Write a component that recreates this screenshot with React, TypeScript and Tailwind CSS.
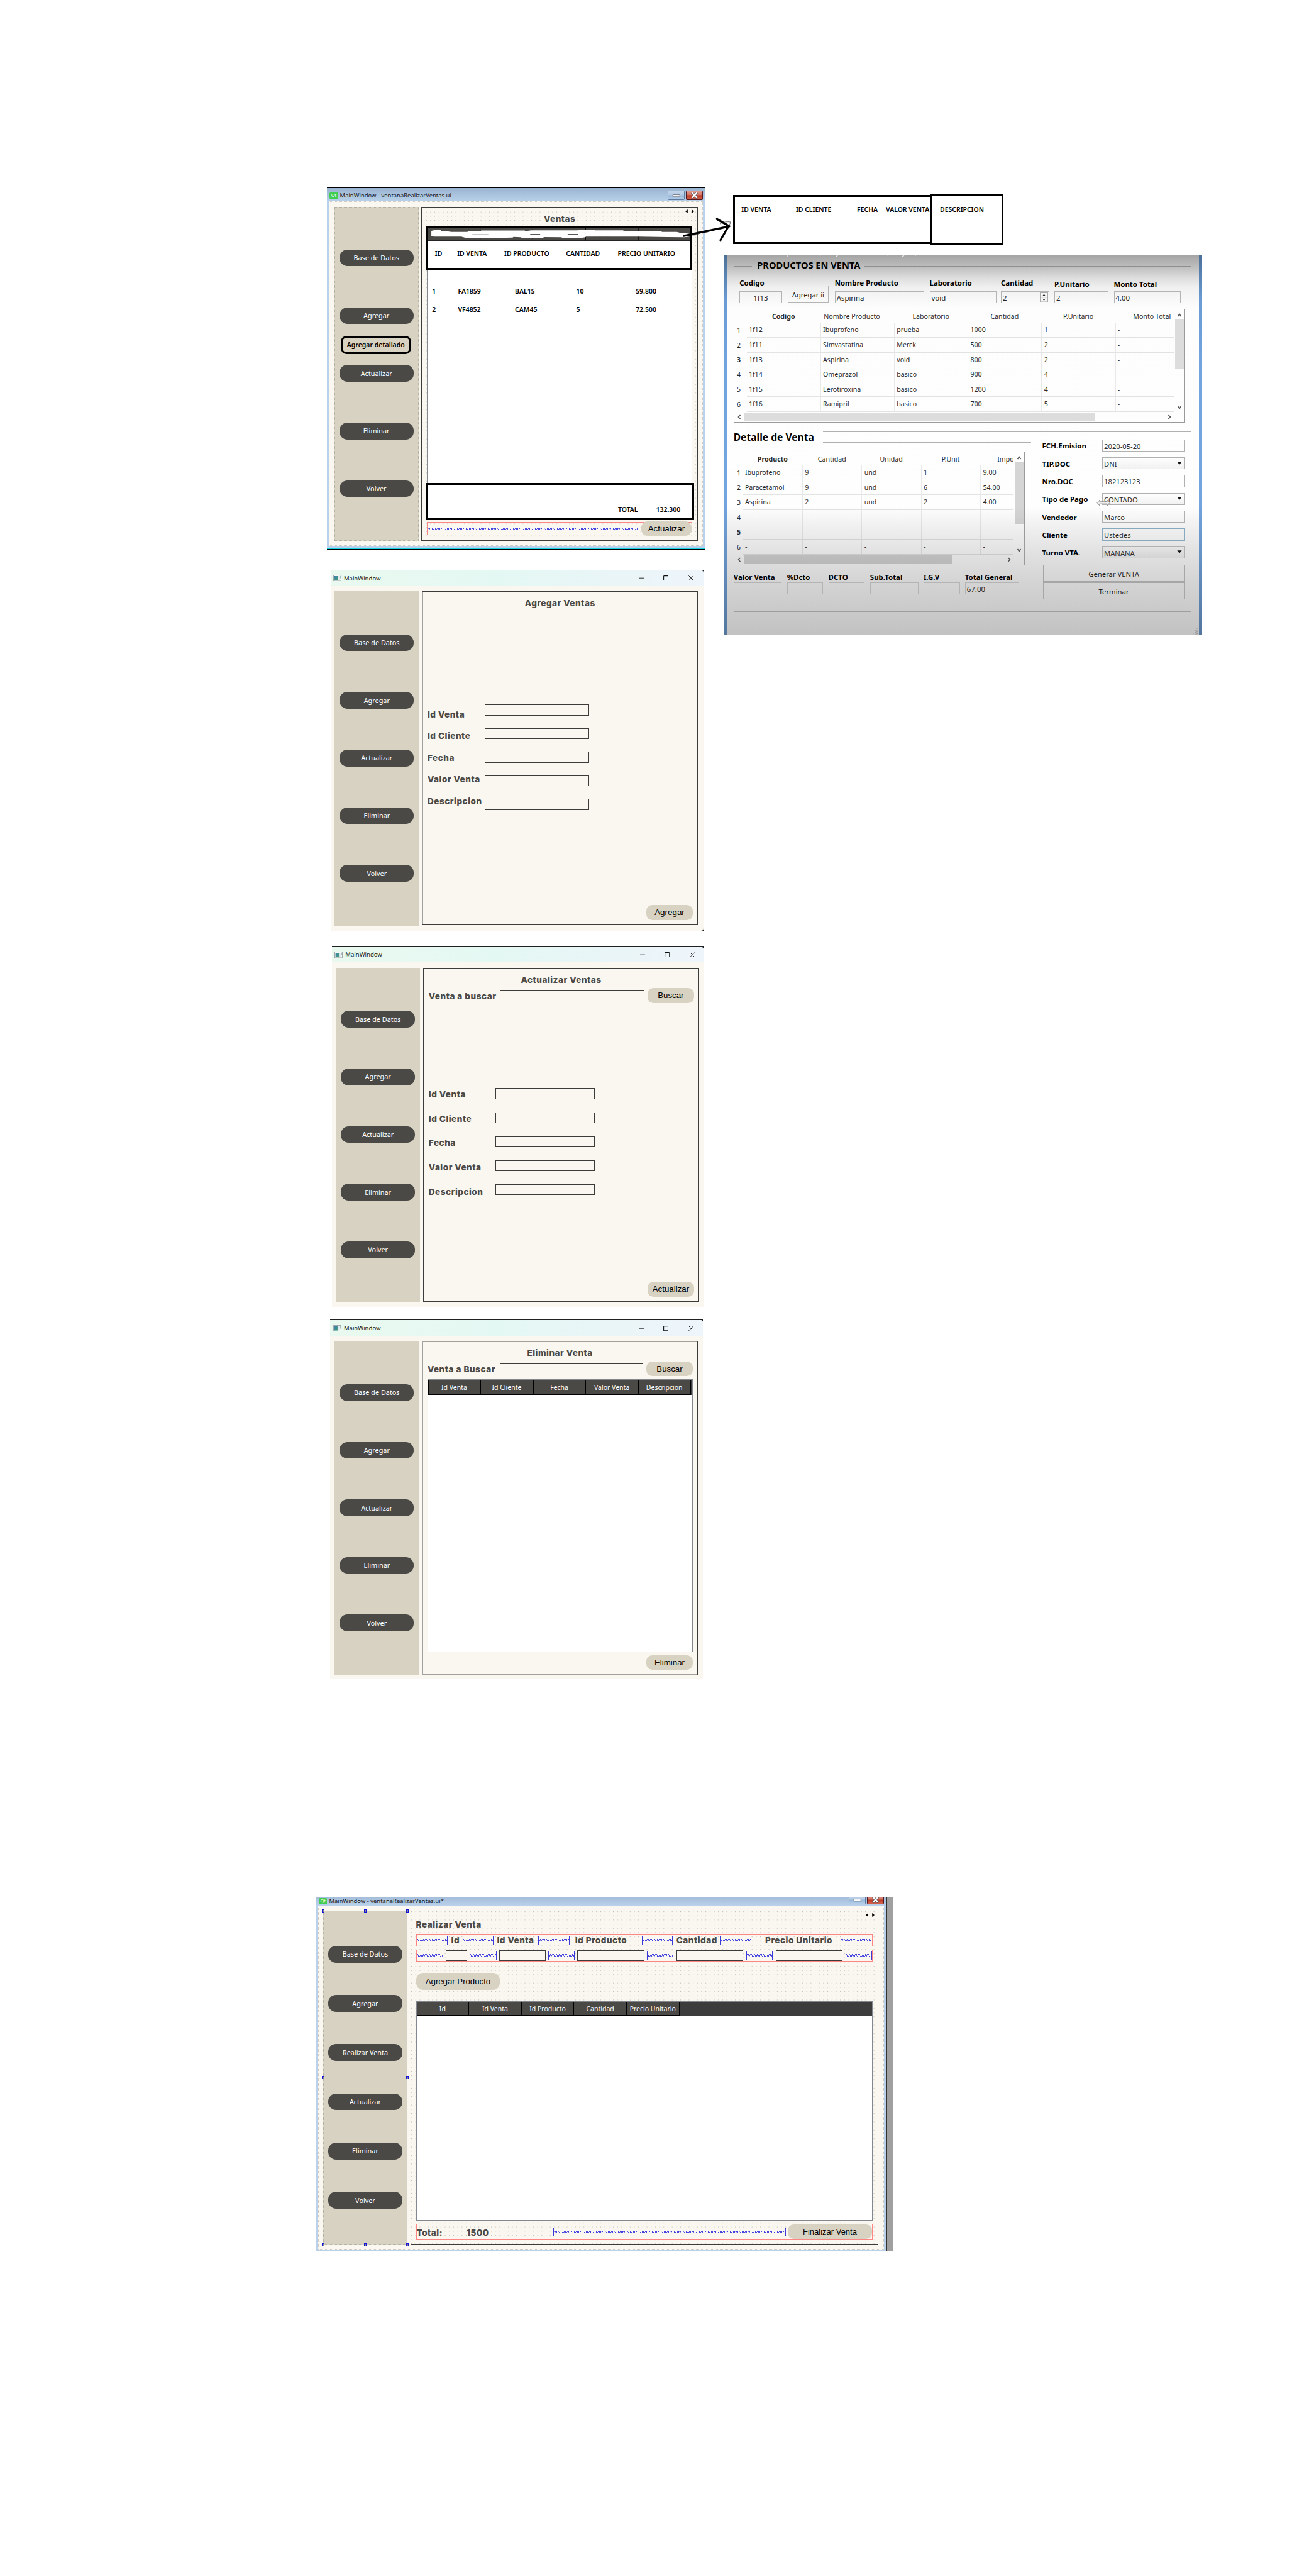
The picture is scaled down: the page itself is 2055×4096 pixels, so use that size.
import React from "react";

const NOTO = "font-['Noto_Sans',sans-serif]";
const ARIAL = "font-['Liberation_Sans',Arial,sans-serif]";
const heavy =
  "font-['Inter',sans-serif] font-extrabold text-[13.6px] leading-[18px] tracking-[0.5px] text-[#4b4946] whitespace-nowrap";
const dots =
  "bg-[radial-gradient(circle_at_0.6px_0.6px,#bdbab4_0.5px,transparent_0.9px)] bg-[length:6.69px_6.69px]";

/* ---------- shared pieces ---------- */

function Sidebar({ items, className = "" }: { items: string[]; className?: string }) {
  return (
    <div className={`flex shrink-0 flex-col items-center justify-between bg-[#d8d2c2] w-[133.8px] ${className}`}>
      {items.map((t) => (
        <button
          key={t}
          className={`${NOTO} flex h-[26.7px] w-[117.9px] items-center justify-center rounded-[12.5px] bg-[#4b4946] pt-px text-[10.85px] leading-none text-white`}
        >
          {t}
        </button>
      ))}
    </div>
  );
}

function Pill({ children, className = "" }: { children: React.ReactNode; className?: string }) {
  return (
    <button
      className={`${ARIAL} flex h-[23.3px] shrink-0 items-center justify-center rounded-[9.5px] bg-[#d8d2c2] leading-none whitespace-nowrap text-black ${className}`}
    >
      {children}
    </button>
  );
}

function Box({ className = "" }: { className?: string }) {
  return <div className={`shrink-0 border border-[#3c3c3a] bg-[#faf7f0] ${className}`} />;
}

function AppIcon() {
  return (
    <svg width="13" height="10.4" viewBox="0 0 13 10.4" className="shrink-0">
      <defs>
        <linearGradient id="app" x1="0" y1="0" x2="1" y2="1">
          <stop offset="0" stopColor="#3f7fb0" />
          <stop offset="1" stopColor="#3fa079" />
        </linearGradient>
      </defs>
      <rect x="0.5" y="0.5" width="12" height="9.4" fill="#f6f8f8" stroke="#a3a9ab" />
      <rect x="1.6" y="2" width="5.6" height="6.6" fill="url(#app)" />
      <rect x="8.3" y="2" width="1.4" height="6.6" fill="#dfe6e6" />
      <rect x="10.8" y="1.6" width="0.8" height="4" fill="#6b96a8" />
    </svg>
  );
}

function Win11({
  children,
  className,
  corners,
  bar,
  body,
  sidebar,
}: {
  children: React.ReactNode;
  className: string;
  corners: string;
  bar: string;
  body: string;
  sidebar: string;
}) {
  return (
    <section className={`absolute bg-[#202020] ${className}`}>
      <div className={`flex h-full flex-col overflow-hidden bg-[#faf7f0] ${corners}`}>
        <div className={`flex shrink-0 items-center bg-[linear-gradient(90deg,#e9f9ef,#e4f8f3_45%,#e9f5f7_75%,#eef5fb)] ${bar}`}>
          <AppIcon />
          <span className={`${NOTO} ml-[4.3px] flex-1 text-[9.55px] leading-none text-[#1b1b1b]`}>MainWindow</span>
          <svg width="8.4" height="8.4" viewBox="0 0 8.4 8.4" className="mr-[30.6px]">
            <path d="M0 4.2H8.4" stroke="#111" strokeWidth="0.9" />
          </svg>
          <svg width="8.4" height="8.4" viewBox="0 0 8.4 8.4" className="mr-[31.2px]">
            <rect x="0.6" y="0.6" width="7.2" height="7.2" rx="0.9" fill="none" stroke="#111" strokeWidth="1.1" />
          </svg>
          <svg width="8.4" height="8.4" viewBox="0 0 8.4 8.4">
            <path d="M0.3 0.3L8.1 8.1M8.1 0.3L0.3 8.1" stroke="#111" strokeWidth="0.9" />
          </svg>
        </div>
        <div className={`flex min-h-0 flex-1 items-start gap-[4.7px] ${body}`}>
          <Sidebar items={["Base de Datos", "Agregar", "Actualizar", "Eliminar", "Volver"]} className={sidebar} />
          <div className="flex h-[531.1px] w-[439.6px] flex-col border border-[#3c3c3a] shadow-[inset_0_0_0_1px_#a3a19d]">
            {children}
          </div>
        </div>
      </div>
    </section>
  );
}

const fields = ["Id Venta", "Id Cliente", "Fecha", "Valor Venta", "Descripcion"];

function QtLogo() {
  return (
    <div className={`${NOTO} flex h-[10px] w-[13.4px] shrink-0 items-center justify-center rounded-[1.5px] bg-[#41cd52] text-[7.4px] leading-none text-white`}>
      Qt
    </div>
  );
}

function AeroButtons({ className = "" }: { className?: string }) {
  return (
    <div className={`flex gap-[2px] ${className}`}>
      <svg width="27" height="15" viewBox="0 0 27 15">
        <defs>
          <linearGradient id="mn" x1="0" y1="0" x2="0" y2="1">
            <stop offset="0" stopColor="#c3d6ea" />
            <stop offset="0.48" stopColor="#b4cbe4" />
            <stop offset="0.52" stopColor="#98b6d7" />
            <stop offset="1" stopColor="#b5cfea" />
          </linearGradient>
        </defs>
        <rect x="0.5" y="0.5" width="26" height="14" rx="1" fill="url(#mn)" stroke="#5f7a9c" />
        <rect x="8.2" y="6.6" width="11" height="3.2" rx="0.6" fill="#fff" stroke="#535b6b" strokeWidth="0.8" />
      </svg>
      <svg width="27" height="15" viewBox="0 0 27 15">
        <defs>
          <linearGradient id="cl" x1="0" y1="0" x2="0" y2="1">
            <stop offset="0" stopColor="#e3a195" />
            <stop offset="0.48" stopColor="#d2705f" />
            <stop offset="0.52" stopColor="#b93a25" />
            <stop offset="1" stopColor="#d5634c" />
          </linearGradient>
        </defs>
        <rect x="0.5" y="0.5" width="26" height="14" rx="1" fill="url(#cl)" stroke="#541a22" />
        <path d="M9.4 3.4L17.8 11.8M17.8 3.4L9.4 11.8" stroke="#535b6b" strokeWidth="3.8" />
        <path d="M9.8 3.7L17.4 11.5M17.4 3.7L9.8 11.5" stroke="#fff" strokeWidth="2.4" />
      </svg>
    </div>
  );
}

function Pager({ className = "" }: { className?: string }) {
  return (
    <svg width="14" height="6" viewBox="0 0 14 6" className={`shrink-0 ${className}`}>
      <path d="M3.8 0L0 3L3.8 6ZM10.2 0L14 3L10.2 6Z" fill="#000" />
    </svg>
  );
}

function Spring({ className = "" }: { className?: string }) {
  return (
    <div className={`flex h-[14px] shrink-0 items-center border-x border-[#3a3ad8] bg-[#faf7f0] ${className}`}>
      <div className="h-[4px] w-full bg-[repeating-linear-gradient(110deg,#4545e0_0px,#4545e0_0.9px,#faf7f0_1.1px,#faf7f0_2.2px)]" />
    </div>
  );
}

/* ---------- window: Ventas ---------- */

function Scribble() {
  return (
    <svg viewBox="19 24 1479 88" preserveAspectRatio="none" className="h-[19.6px] w-full">
      <rect x="19" y="24" width="1479" height="88" fill="#4b4946" />
      <path d="M311.5 24V112M608.5 24V112M905.5 24V112M1202.5 24V112" stroke="#000" strokeWidth="4" />
      <path d="M19 110.5H1498" stroke="#000" strokeWidth="4" />
      <path
        d="M37 42L58 36L90 38L95 44L120 44L150 50L240 50L245 45L312 45L318 40L563 40L568 44L600 39L860 39L865 36L955 36L958 39L1118 39L1120 42L1297 43L1332 46L1338 50L1420 50L1440 56L1490 62V84L1463 88L1368 87L1203 84L908 84L905 88L880 93L775 92L770 88L670 87L668 93L548 92L540 88L500 86L495 90L420 92L415 96L235 96L225 90L205 84L50 84L37 78Z"
        fill="#fff"
      />
      <path d="M268 70H358M594 66H650M805 66H865" stroke="#222" strokeWidth="4" />
      <path d="M955 81H1040" stroke="#4b4946" strokeWidth="5" strokeDasharray="7 5" />
    </svg>
  );
}

const black = `${NOTO} font-semibold text-[10.45px] leading-none text-black whitespace-nowrap`;

function VentasWindow() {
  return (
    <section className="absolute top-[297.5px] left-[519.6px] flex h-[576px] w-[602.6px] flex-col border-t border-b border-black bg-[#b9d1ea]">
      <div className="flex h-[21px] shrink-0 items-center bg-[linear-gradient(#99b4d1,#b9d1ea)] pt-[4px] pl-[4.6px]">
        <QtLogo />
        <span className={`${NOTO} ml-[3px] flex-1 text-[9.45px] leading-none text-[#1b1b1b]`}>
          MainWindow - ventanaRealizarVentas.ui
        </span>
        <AeroButtons className="mr-[4px] self-start" />
      </div>
      <div className="mx-[3.8px] flex h-[548.6px] gap-[4.8px] border border-dotted border-[#cfccc3] bg-[#faf7f0] pt-[8.3px] pl-[7.4px]">
        <div className="relative">
          <Sidebar
            items={["Base de Datos", "Agregar", "Actualizar", "Eliminar", "Volver"]}
            className="h-[531.1px] border border-dotted border-[#b5b1a5] pt-[67px] pb-[68.6px]"
          />
          <div className={`${black} absolute top-[205.3px] left-[10px] flex h-[28.8px] w-[112px] items-center justify-center rounded-[9px] border-[3.2px] border-black`}>
            Agregar detallado
          </div>
        </div>
        <div className={`flex h-[531.1px] w-[439.5px] flex-col border border-[#3c3c3a] ${dots}`}>
          <Pager className="mt-[3px] mr-[5px] self-end" />
          <h2 className={`${heavy} self-center`}>Ventas</h2>
          <div className="mt-[3.4px] ml-[6.2px] flex h-[69px] w-[423.5px] shrink-0 flex-col border-[3.2px] border-black bg-white">
            <Scribble />
            <div className={`${black} grid flex-1 grid-cols-[35.3px_74.9px_98.3px_82.2px_auto] items-center pb-[3px] pl-[11.3px]`}>
              <span>ID</span>
              <span>ID VENTA</span>
              <span>ID PRODUCTO</span>
              <span>CANTIDAD</span>
              <span>PRECIO UNITARIO</span>
            </div>
          </div>
          <div className="ml-[7.8px] h-[339.2px] w-[421.5px] shrink-0 border-x border-[#828790] bg-white pt-[20px]">
            {[
              ["1", "FA1859", "BAL15", "10", "59.800"],
              ["2", "VF4852", "CAM45", "5", "72.500"],
            ].map((r) => (
              <div key={r[0]} className={`${black} grid h-[28.9px] grid-cols-[41.3px_90.6px_97.4px_94.7px_auto] items-center pl-[7px]`}>
                {r.map((c) => (
                  <span key={c}>{c}</span>
                ))}
              </div>
            ))}
          </div>
          <div className={`${black} ml-[7px] flex h-[58.2px] w-[425.9px] shrink-0 items-end justify-end gap-[29px] border-[3.2px] border-black bg-white pr-[19px] pb-[8px]`}>
            <span>TOTAL</span>
            <span>132.300</span>
          </div>
          <div className="mt-[3.4px] ml-[7.4px] flex h-[21.4px] w-[422.4px] items-center justify-between border border-[#ff8484]">
            <Spring className="w-[335.5px]" />
            <Pill className="h-[20.2px] w-[80.5px] text-[13.3px]">Actualizar</Pill>
          </div>
        </div>
      </div>
      <div className="mt-auto h-[1.5px] bg-[#19d3e6]" />
    </section>
  );
}

function HeaderCallout() {
  return (
    <>
      <div className={`${black} absolute top-[309.7px] left-[1166px] flex h-[78.5px] w-[316.5px] border-[3.2px] border-black bg-white pt-[15.6px] pl-[10.3px]`}>
        <span className="w-[86.7px]">ID VENTA</span>
        <span className="w-[97.1px]">ID CLIENTE</span>
        <span className="w-[45.9px]">FECHA</span>
        <span>VALOR VENTA</span>
      </div>
      <div className={`${black} absolute top-[307.7px] left-[1479.3px] h-[82.4px] w-[116.8px] border-[3.2px] border-black bg-white pt-[17.6px] pl-[12.8px]`}>
        DESCRIPCION
      </div>
      <svg width="80" height="44" viewBox="1084 342 80 44" className="absolute top-[342px] left-[1084px]">
        <path d="M1087.5 375.2L1160 359.8M1140.2 348.3L1160 359.7M1146 381.8L1158 361" stroke="#000" strokeWidth="3.3" fill="none" strokeLinecap="round" />
        <path
          d="M1097 374C1104 374 1110 374 1113 371C1116 368 1122 371 1128 368C1134 364 1142 366 1150 363M1145 356C1150 353 1156 352 1162 353C1162 355 1160 358 1158 360M1154.5 364V376"
          stroke="#000"
          strokeWidth="0.6"
          fill="none"
        />
      </svg>
    </>
  );
}

/* ---------- window: productos en venta ---------- */

const lab = `${NOTO} font-bold text-[11.45px] leading-[18px] text-black whitespace-nowrap`;
const val = `${NOTO} flex items-center text-[11.4px] leading-none text-[#222] whitespace-nowrap border border-[#b4b4b4]`;

function Field({ label, value, w, className = "", low, center }: { label: string; value?: string; w: string; className?: string; low?: boolean; center?: boolean }) {
  return (
    <div className={`flex shrink-0 flex-col ${w} ${className}`}>
      <div className={`${lab} h-[21.5px] ${low ? "pt-[1.8px]" : ""}`}>{label}</div>
      <div className={`${val} h-[19.5px] pt-[2px] ${center ? "" : "pl-[2px]"}`}>
        <span className={`flex-1 ${center ? "text-center" : ""}`}>{value}</span>
        {label === "Cantidad" && (
          <svg width="13" height="15.5" viewBox="0 0 13 15.5" className="mt-[-2px] mr-[1px]">
            <rect x="0.5" y="0.5" width="12" height="14.5" fill="#f6f6f6" stroke="#aaa" />
            <path d="M0 7.8H13" stroke="#aaa" />
            <path d="M4 5.5H9L6.5 2.5ZM4 10H9L6.5 13Z" fill="#222" />
          </svg>
        )}
      </div>
    </div>
  );
}

function Chevron({ d }: { d: "up" | "down" | "left" | "right" }) {
  const p = {
    up: "M1.5 6L4 2.5L6.5 6",
    down: "M1.5 2L4 5.5L6.5 2",
    left: "M5.5 1L2.5 4L5.5 7",
    right: "M2.5 1L5.5 4L2.5 7",
  }[d];
  return (
    <svg width="8" height="8" viewBox="0 0 8 8" className="shrink-0">
      <path d={p} fill="none" stroke="#555" strokeWidth="1.6" />
    </svg>
  );
}

function ScrollTable({
  className,
  grid,
  head,
  rows,
  boldRows,
  vthumb,
  hthumb,
  thumb,
}: {
  className: string;
  grid: string;
  head: React.ReactNode;
  rows: string[][];
  boldRows: string;
  vthumb: string;
  hthumb: string;
  thumb: string;
}) {
  return (
    <div className={`${NOTO} flex h-[181px] shrink-0 flex-col overflow-hidden border border-[#9a9a9a] text-[10.65px] leading-none text-[#2b2b2b] ${className}`}>
      <div className="flex">
        <div className="min-w-0 flex-1 overflow-hidden">
          <div className={`grid h-[21.6px] items-center pt-[1.5px] whitespace-nowrap ${grid}`}>{head}</div>
          {rows.map((r) => (
            <div key={r[0]} className={`grid h-[23.6px] ${grid}`}>
              {r.map((c, j) =>
                j === 0 ? (
                  <span key={j} className={`flex items-center pl-[4.2px] ${boldRows.includes(c) ? "font-bold" : ""}`}>
                    {c}
                  </span>
                ) : (
                  <span
                    key={j}
                    className={`flex items-center border-b border-b-black/10 pl-[3.2px] whitespace-nowrap ${j > 1 ? "border-l border-l-black/8" : ""}`}
                  >
                    {c}
                  </span>
                ),
              )}
            </div>
          ))}
        </div>
        <div className="flex w-[17px] flex-col items-center justify-between pt-[5px] pb-[3px]">
          <div className="flex flex-col items-center gap-[3px]">
            <Chevron d="up" />
            <div className={`w-[14.3px] ${thumb} ${vthumb}`} />
          </div>
          <Chevron d="down" />
        </div>
      </div>
      <div className="flex flex-1 items-center justify-between pr-[20px] pl-[4.5px]">
        <div className="flex items-center gap-[3.5px]">
          <Chevron d="left" />
          <div className={`h-[14px] ${thumb} ${hthumb}`} />
        </div>
        <Chevron d="right" />
      </div>
    </div>
  );
}

function Combo({ label, value, kind }: { label: string; value: string; kind?: "combo" | "focus" }) {
  return (
    <div className="flex h-[19.4px] items-center">
      <span className={`${lab} w-[95px] pt-[2px]`}>{label}</span>
      <div
        className={`${NOTO} flex h-full w-[132.7px] items-center justify-between border pt-[2px] pr-[4px] pl-[2.5px] text-[11.2px] leading-none text-[#2b2b2b] ${
          kind === "combo"
            ? "border-[#b0b0b0] bg-[linear-gradient(transparent,rgba(0,0,0,0.05))]"
            : kind === "focus"
              ? "border-[#87a9bd]"
              : "border-[#b0b0b0]"
        }`}
      >
        {value}
        {kind === "combo" && (
          <svg width="8" height="5" viewBox="0 0 8 5" className="mt-[-3px]">
            <path d="M0.3 0.3H7.7L4 4.8Z" fill="#111" />
          </svg>
        )}
      </div>
    </div>
  );
}

function ProductosPanel() {
  return (
    <section className="absolute top-[404.7px] left-[1151.8px] h-[604.1px] w-[760.2px] bg-[linear-gradient(#4b6f97,#6a9bd3_12%,#72a4de_30%,#72a4de_65%,#54769e)] px-[5.4px]">
      <div className="relative h-full overflow-hidden bg-[linear-gradient(#a3a3a3_0px,#aeaeae_8px,#c2c2c2_22px,#dcdcdc_36px,#f0f0f0_52px,#fdfdfd_85px,#fefefe_400px,#f2f2f2_427px,#e2e2e2_472px,#d4d4d4_520px,#c8c8c8_575px,#c2c2c2_604px)] pl-[9.5px]">
        <svg width="260" height="4" viewBox="0 0 260 4" className="absolute top-0 left-[60px]">
          <path
            d="M2 0L1 1M35 0V3.4M89 0L88 1M115.500 0C115 2 114 2.800 112 2.800M195 0L194 1M221 0C220.500 2 219.500 2.800 217.500 2.800M240 0L239 1.200"
            fill="none"
            stroke="#e6e6e6"
            strokeWidth="1.4"
          />
        </svg>
        <div className="flex h-[31.8px] items-end pr-[11.5px]">
          <div className="flex h-[25px] w-full items-center">
            <div className="h-px w-[29.2px] bg-[#8e8e8e]" />
            <span className={`${NOTO} -mt-[6px] ml-[8.4px] w-[170.5px] text-[14.65px] leading-none font-bold whitespace-nowrap text-black`}>
              PRODUCTOS EN VENTA
            </span>
            <div className="h-px flex-1 bg-[#8e8e8e]" />
          </div>
        </div>
        <div className="flow-root h-[235.4px] w-[728px] border-r border-[#b5b5b5]">
          <div className="-mt-[12px] h-[66.4px] border-l border-[#a9a9a9] pt-[16.7px] pl-[8.5px]">
            <div className="flex">
              <Field label="Codigo" value="1f13" w="w-[67.4px]" center />
              <div className={`${NOTO} mt-[13px] ml-[9.4px] flex h-[27px] w-[64.8px] items-center justify-center border border-[#b4b4b4] pt-[2px] text-[11.2px] leading-none whitespace-nowrap text-[#222]`}>
                Agregar ii
              </div>
              <Field label="Nombre Producto" value="Aspirina" w="w-[142.5px]" className="ml-[9.9px]" />
              <Field label="Laboratorio" value="void" w="w-[106.4px]" className="ml-[8.4px]" />
              <Field label="Cantidad" value="2" w="w-[76.7px]" className="ml-[7px]" />
              <Field label="P.Unitario" value="2" w="w-[86.1px]" className="ml-[8.4px]" low />
              <Field label="Monto Total" value="4.00" w="w-[106.4px]" className="ml-[8.4px]" low />
            </div>
          </div>
          <ScrollTable
            className="w-[718.6px]"
            grid="grid-cols-[20px_repeat(6,117.2px)]"
            head={
              <>
                <span />
                <span className="text-center font-bold">Codigo</span>
                <span className="pr-[17px] text-center">Nombre Producto</span>
                <span className="text-center">Laboratorio</span>
                <span className="text-center">Cantidad</span>
                <span className="text-center">P.Unitario</span>
                <span className="text-center">Monto Total</span>
              </>
            }
            rows={[
              ["1", "1f12", "Ibuprofeno", "prueba", "1000", "1", "-"],
              ["2", "1f11", "Simvastatina", "Merck", "500", "2", "-"],
              ["3", "1f13", "Aspirina", "void", "800", "2", "-"],
              ["4", "1f14", "Omeprazol", "basico", "900", "4", "-"],
              ["5", "1f15", "Lerotiroxina", "basico", "1200", "4", "-"],
              ["6", "1f16", "Ramipril", "basico", "700", "5", "-"],
            ]}
            boldRows="3"
            vthumb="h-[78.3px]"
            hthumb="w-[557.2px]"
            thumb="bg-black/13"
          />
        </div>

        <div className="flex">
          <div className="w-[473.6px]">
            <div className="flex h-[45.8px]">
              <div className={`${NOTO} w-[142px] pt-[14px] text-[15.6px] leading-[18px] font-bold whitespace-nowrap text-black`}>Detalle de Venta</div>
              <div className="flex-1 pt-[14.5px]">
                <div className="h-[17.3px] border-y border-[#b0b0b0]" />
              </div>
            </div>
            <div className="w-[472.5px] border-r border-[#b5b5b5]">
              <ScrollTable
                className="w-[463.7px]"
                grid="grid-cols-[14px_repeat(4,94.4px)_60px]"
                head={
                  <>
                    <span />
                    <span className="text-center font-bold">Producto</span>
                    <span className="text-center">Cantidad</span>
                    <span className="text-center">Unidad</span>
                    <span className="text-center">P.Unit</span>
                    <span className="pl-[27px]">Impo</span>
                  </>
                }
                rows={[
                  ["1", "Ibuprofeno", "9", "und", "1", "9.00"],
                  ["2", "Paracetamol", "9", "und", "6", "54.00"],
                  ["3", "Aspirina", "2", "und", "2", "4.00"],
                  ["4", "-", "-", "-", "-", "-"],
                  ["5", "-", "-", "-", "-", "-"],
                  ["6", "-", "-", "-", "-", "-"],
                ]}
                boldRows="5"
                vthumb="h-[98.5px]"
                hthumb="w-[331px]"
                thumb="bg-black/16"
              />
              <div className="mt-[10px] flex h-[36.6px] [&>div>div:last-child]:mt-[-4.5px]">
                <Field label="Valor Venta" w="w-[76.7px]" />
                <Field label="%Dcto" w="w-[57.4px]" className="ml-[8.4px]" />
                <Field label="DCTO" w="w-[57.9px]" className="ml-[8.4px]" />
                <Field label="Sub.Total" w="w-[76.7px]" className="ml-[8.4px]" />
                <Field label="I.G.V" w="w-[57.9px]" className="ml-[8.4px]" />
                <Field label="Total General" value="67.00" w="w-[86.1px]" className="ml-[8px]" />
              </div>
            </div>
            <div className="mt-[12px] border-t border-[#9e9e9e]" />
          </div>
          <div className="flex-1 pt-[14.5px]">
            <div className="mr-[11.5px] border-t border-[#b0b0b0]" />
            <div className="mt-[11.2px] flex h-[266px] w-[254.4px] flex-col gap-[8.93px] border-r border-[#b5b5b5] pl-[17.3px]">
              <Combo label="FCH.Emision" value="2020-05-20" />
              <Combo label="TIP.DOC" value="DNI" kind="combo" />
              <Combo label="Nro.DOC" value="182123123" />
              <div className="relative">
                <Combo label="Tipo de Pago" value="CONTADO" kind="combo" />
                <svg width="22" height="11" viewBox="0 0 22 11" className="absolute top-[10px] left-[86px]">
                  <path d="M1 5.5L5 1.2V3.8H17V1.2L21 5.5L17 9.8V7.2H5V9.8Z" fill="#eee" stroke="#777" strokeWidth="0.9" />
                </svg>
              </div>
              <Combo label="Vendedor" value="Marco" />
              <Combo label="Cliente" value="Ustedes" kind="focus" />
              <Combo label="Turno VTA." value="MAÑANA" kind="combo" />
              <div className="mt-[1px] ml-[1px] flex w-[226px] flex-col gap-[1.8px]">
                {["Generar VENTA", "Terminar"].map((t) => (
                  <div key={t} className={`${NOTO} flex h-[26.9px] items-center justify-center border border-[#a6a6a6] pt-[2px] text-[11.3px] leading-none text-[#222]`}>
                    {t}
                  </div>
                ))}
              </div>
            </div>
          </div>
        </div>
        <div className="mt-[7px] mr-[11.5px] border-t border-[#9e9e9e]" />
        <svg width="9" height="12" viewBox="0 0 9 12" className="absolute right-[1px] bottom-0">
          <path d="M7 1V12M4 5V12M1 9V12" stroke="#8f8f8f" strokeWidth="1.4" strokeDasharray="1.5 1.5" />
        </svg>
      </div>
    </section>
  );
}

/* ---------- window: Realizar Venta ---------- */

function Handles() {
  const h = "h-[5px] w-[4px] border border-[#1414d8] bg-[#8c8c8c]";
  return (
    <div className="absolute -inset-x-[2px] -inset-y-[2.5px] flex flex-col justify-between">
      <div className="flex justify-between">
        <i className={h} />
        <i className={h} />
        <i className={h} />
      </div>
      <div className="flex justify-between">
        <i className={h} />
        <i className={h} />
      </div>
      <div className="flex justify-between">
        <i className={h} />
        <i className={h} />
        <i className={h} />
      </div>
    </div>
  );
}

const th = `${NOTO} flex items-center justify-center text-[10.5px] leading-none text-white whitespace-nowrap`;

function RealizarWindow() {
  return (
    <section className="absolute top-[3016.3px] left-[501.6px] flex h-[564px] w-[919.8px]">
      <div className="flex w-[908.4px] flex-col overflow-hidden bg-[#b9d1ea]">
        <div className="flex h-[13.4px] shrink-0 items-center bg-[linear-gradient(#a3bcd9,#b9d1ea)] pl-[5.4px]">
          <QtLogo />
          <span className={`${NOTO} ml-[3px] flex-1 text-[9.45px] leading-none text-[#1b1b1b]`}>
            MainWindow - ventanaRealizarVentas.ui*
          </span>
          <AeroButtons className="-mt-[5.5px] mr-[4.2px]" />
        </div>
        <div className="mx-[4.2px] flex h-[547.8px] gap-[4.8px] border border-dotted border-[#cfccc3] bg-[#faf7f0] pt-[7.7px] pl-[7.3px]">
          <div className="relative h-[531px]">
            <Sidebar
              items={["Base de Datos", "Agregar", "Realizar Venta", "Actualizar", "Eliminar", "Volver"]}
              className="h-[531px] border border-dotted border-[#b5b1a5] pt-[54.5px] pb-[56.5px]"
            />
            <Handles />
          </div>
          <div className={`flex h-[531px] w-[744.2px] flex-col border border-[#3c3c3a] pl-[7.9px] ${dots}`}>
            <Pager className="mt-[2.5px] mr-[4.5px] self-end" />
            <h2 className={`${heavy} mt-[3.5px]`}>Realizar Venta</h2>
            <div className="mt-[6px] flex h-[20px] w-[726.3px] shrink-0 items-center border border-[#ff8484]">
              <Spring className="w-[49.5px]" />
              <span className={`${heavy} ml-[5.5px] w-[18.2px]`}>Id</span>
              <Spring className="w-[49.5px]" />
              <span className={`${heavy} ml-[5.2px] w-[65.2px]`}>Id Venta</span>
              <Spring className="w-[50px]" />
              <span className={`${heavy} ml-[9px] w-[106.3px]`}>Id Producto</span>
              <Spring className="w-[49.5px]" />
              <span className={`${heavy} ml-[5.3px] w-[69.3px]`}>Cantidad</span>
              <Spring className="w-[50px]" />
              <span className={`${heavy} ml-[22.1px] w-[119.5px]`}>Precio Unitario</span>
              <Spring className="w-[49.5px]" />
            </div>
            <div className="mt-[4.7px] flex h-[18.8px] w-[726.3px] shrink-0 items-center justify-between border border-[#ff8484]">
              <Spring className="w-[42px]" />
              <Box className="h-[17.5px] w-[33.5px]" />
              <Spring className="w-[42.5px]" />
              <Box className="h-[17.5px] w-[73.5px]" />
              <Spring className="w-[41.5px]" />
              <Box className="h-[17.5px] w-[106.3px]" />
              <Spring className="w-[42px]" />
              <Box className="h-[17.5px] w-[106.3px]" />
              <Spring className="w-[42.5px]" />
              <Box className="h-[17.5px] w-[106.3px]" />
              <Spring className="w-[42px]" />
            </div>
            <Pill className="mt-[18px] h-[26.8px] w-[133.8px] rounded-[11px] text-[13.2px]">Agregar Producto</Pill>
            <div className="mt-[18.1px] h-[349.5px] w-[726.3px] shrink-0 border border-[#828790] bg-white">
              <div className="flex h-[21.8px] bg-[#3c3c3c]">
                {["Id", "Id Venta", "Id Producto", "Cantidad", "Precio Unitario"].map((t) => (
                  <div key={t} className={`${th} w-[83.6px] border-r border-b border-black bg-[#4b4946] pt-[2px]`}>
                    {t}
                  </div>
                ))}
              </div>
            </div>
            <div className="mt-[5px] flex h-[24.5px] w-[726.3px] shrink-0 items-center border border-[#ff8484]">
              <span className={`${heavy} w-[79.5px] pt-[2px]`}>Total:</span>
              <span className={`${heavy} w-[137.5px] pt-[2px]`}>1500</span>
              <Spring className="w-[370px]" />
              <Pill className="ml-auto w-[133.8px] text-[13px]">Finalizar Venta</Pill>
            </div>
          </div>
        </div>
      </div>
      <div className="w-px bg-[#333]" />
      <div className="flex-1 bg-[#a0a0a0]" />
    </section>
  );
}

/* ---------- board ---------- */

export default function App() {
  return (
    <main className="relative h-[4096px] w-[2055px] overflow-hidden bg-white">
      <VentasWindow />
      <ProductosPanel />
      <HeaderCallout />

      <Win11
        className="top-[905.9px] left-[526.5px] h-[575.2px] w-[592.7px] py-px"
        corners="rounded-r-[4px]"
        bar="h-[24.8px] pr-[16.2px] pl-[3.1px]"
        body="pt-[8.7px] pl-[5.9px]"
        sidebar="h-[531.2px] pt-[68.4px] pb-[69.8px]"
      >
        <h2 className={`${heavy} mt-[9px] self-center`}>Agregar Ventas</h2>
        <div className="mt-[152px] flex pl-[8.1px]">
          <div className="flex w-[90.6px] flex-col gap-[16.4px] pt-[6.6px]">
            {fields.map((f) => (
              <span key={f} className={heavy}>
                {f}
              </span>
            ))}
          </div>
          <div className="flex flex-col gap-[20px]">
            {fields.map((f) => (
              <Box key={f} className="h-[17.5px] w-[166px]" />
            ))}
          </div>
        </div>
        <Pill className="mt-auto mr-[7.6px] mb-[7.7px] w-[73.8px] self-end text-[13.4px]">Agregar</Pill>
      </Win11>

      <Win11
        className="top-[1503.7px] left-[528.4px] h-[574.1px] w-[590.8px] pt-[2px]"
        corners="rounded-tr-[4px]"
        bar="h-[24.7px] pr-[14.2px] pl-[3.6px]"
        body="pt-[9px] pl-[5.9px]"
        sidebar="h-[530.9px] pt-[68px] pb-[69.5px]"
      >
        <h2 className={`${heavy} mt-[8.6px] self-center`}>Actualizar Ventas</h2>
        <div className="mt-[4.3px] flex h-[23.3px] shrink-0 items-center pl-[8px]">
          <span className={`${heavy} w-[113.5px] pt-[2px]`}>Venta a buscar</span>
          <Box className="h-[17.7px] w-[230px]" />
          <Pill className="ml-[4.7px] w-[73.8px] text-[13.3px]">Buscar</Pill>
        </div>
        <div className="mt-[135.9px] flex pl-[8px]">
          <div className="flex w-[106px] flex-col gap-[20.75px] pt-[0.4px]">
            {fields.map((f) => (
              <span key={f} className={heavy}>
                {f}
              </span>
            ))}
          </div>
          <div className="flex flex-col gap-[20.5px]">
            {fields.map((f) => (
              <Box key={f} className="h-[17.6px] w-[158.2px]" />
            ))}
          </div>
        </div>
        <Pill className="mt-auto mr-[7.6px] mb-[7.7px] w-[73.8px] self-end text-[13.3px]">Actualizar</Pill>
      </Win11>

      <Win11
        className="top-[2098.4px] left-[524.5px] h-[571.4px] w-[593.9px] pt-px"
        corners="rounded-tr-[4px]"
        bar="h-[24.9px] pr-[15.4px] pl-[5.1px]"
        body="pt-[8.2px] pl-[7.9px]"
        sidebar="h-[531.2px] pt-[68.4px] pb-[69.5px]"
      >
        <h2 className={`${heavy} mt-[9px] self-center`}>Eliminar Venta</h2>
        <div className="mt-[4.3px] flex h-[23.3px] shrink-0 items-center pl-[8px]">
          <span className={`${heavy} w-[115.5px] pt-[2px]`}>Venta a Buscar</span>
          <Box className="h-[17.3px] w-[228px]" />
          <Pill className="ml-[4.7px] w-[73.8px] text-[13.3px]">Buscar</Pill>
        </div>
        <div className="mt-[5px] ml-[7.7px] h-[434px] w-[422.3px] shrink-0 border border-[#828790] bg-white">
          <div className="flex h-[23.6px] bg-[#3c3c3c]">
            {fields.map((t) => (
              <div key={t} className={`${th} w-[83.6px] border border-black bg-[#4b4946]`}>
                {t}
              </div>
            ))}
          </div>
        </div>
        <Pill className="mt-[4.5px] mr-[7.6px] w-[73.8px] self-end text-[13.3px]">Eliminar</Pill>
      </Win11>

      <RealizarWindow />
    </main>
  );
}
